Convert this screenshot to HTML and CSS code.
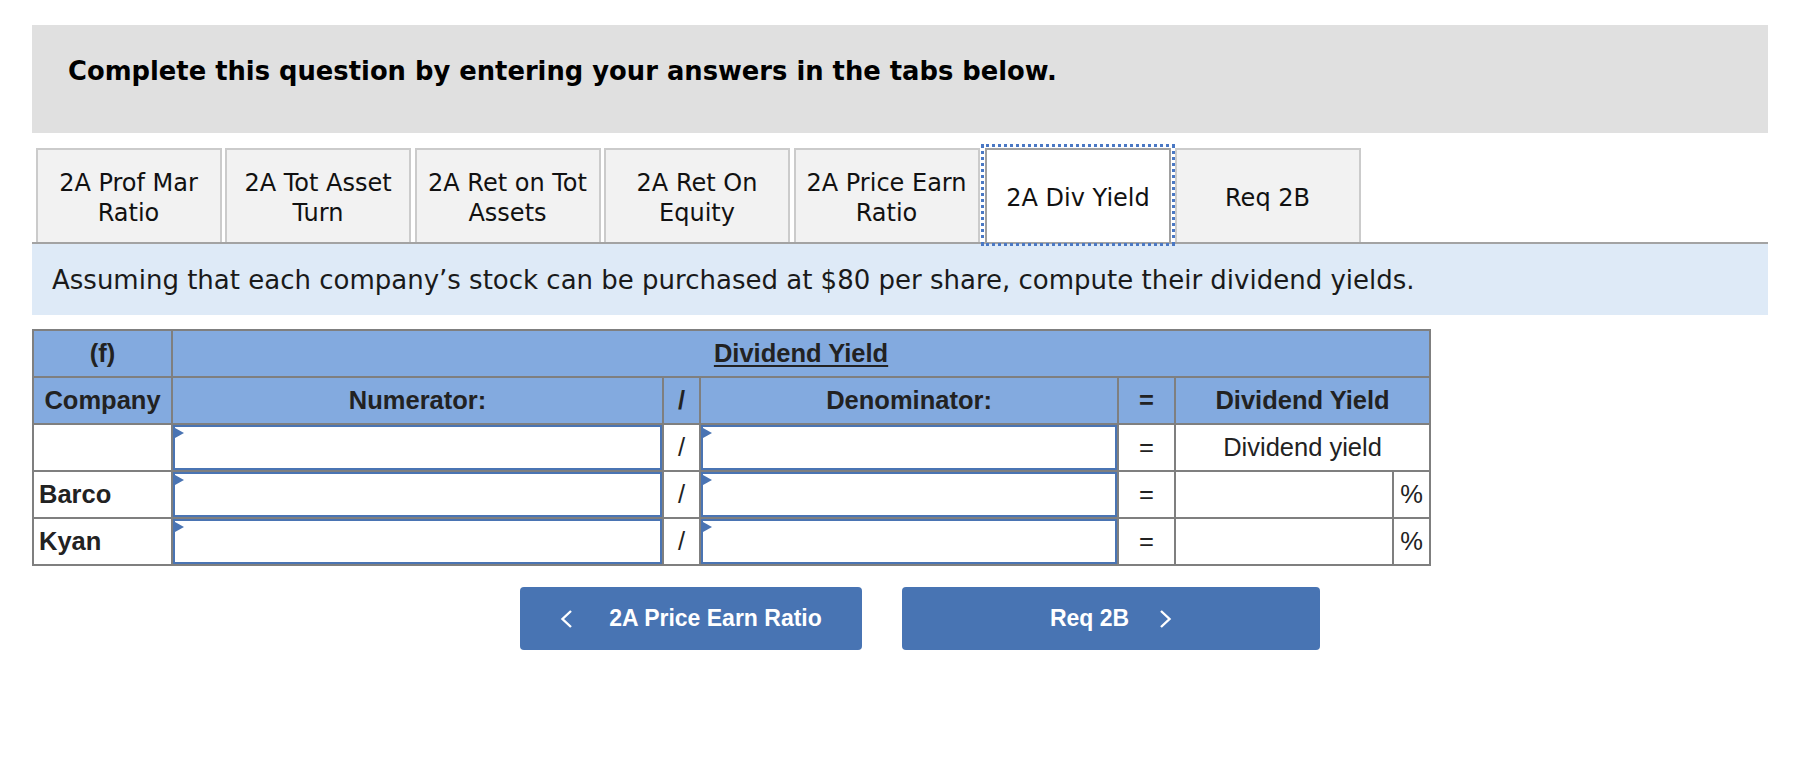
FILE: index.html
```html
<!DOCTYPE html>
<html lang="en">
<head>
  <meta charset="UTF-8">
  <meta name="viewport" content="width=device-width, initial-scale=1.0">
  <title>Dividend Yield</title>
  <link rel="stylesheet" href="styles.css">
</head>
<body>
  <div class="page">
    <div class="prompt">Complete this question by entering your answers in the tabs below.</div>

    <div class="tabs">
      <div class="tab">2A Prof Mar<br>Ratio</div>
      <div class="tab">2A Tot Asset<br>Turn</div>
      <div class="tab">2A Ret on Tot<br>Assets</div>
      <div class="tab">2A Ret On<br>Equity</div>
      <div class="tab">2A Price Earn<br>Ratio</div>
      <div class="tab active">2A Div Yield</div>
      <div class="tab">Req 2B</div>
    </div>

    <div class="note">Assuming that each company’s stock can be purchased at $80 per share, compute their dividend yields.</div>

    <table class="ratio-table">
      <colgroup>
        <col class="c-company">
        <col class="c-num">
        <col class="c-op">
        <col class="c-den">
        <col class="c-eq">
        <col class="c-result">
        <col class="c-unit">
      </colgroup>
      <tr class="head">
        <th>(f)</th>
        <th colspan="6"><span class="title">Dividend Yield</span></th>
      </tr>
      <tr class="head">
        <th>Company</th>
        <th>Numerator:</th>
        <th>/</th>
        <th>Denominator:</th>
        <th>=</th>
        <th colspan="2">Dividend Yield</th>
      </tr>
      <tr>
        <td class="name"></td>
        <td class="entry"><div class="field"></div></td>
        <td class="op">/</td>
        <td class="entry"><div class="field"></div></td>
        <td class="op">=</td>
        <td class="label" colspan="2">Dividend yield</td>
      </tr>
      <tr>
        <td class="name">Barco</td>
        <td class="entry"><div class="field"></div></td>
        <td class="op">/</td>
        <td class="entry"><div class="field"></div></td>
        <td class="op">=</td>
        <td class="result"></td>
        <td class="op">%</td>
      </tr>
      <tr>
        <td class="name">Kyan</td>
        <td class="entry"><div class="field"></div></td>
        <td class="op">/</td>
        <td class="entry"><div class="field"></div></td>
        <td class="op">=</td>
        <td class="result"></td>
        <td class="op">%</td>
      </tr>
    </table>

    <div class="nav">
      <button class="nav-btn prev">
        <svg width="13" height="18" viewBox="0 0 13 18"><polyline points="11,1 2.5,9 11,17" fill="none" stroke="#fff" stroke-width="2.4"/></svg>
        <span>2A Price Earn Ratio</span>
      </button>
      <button class="nav-btn next">
        <span>Req 2B</span>
        <svg width="13" height="18" viewBox="0 0 13 18"><polyline points="2,1 10.5,9 2,17" fill="none" stroke="#fff" stroke-width="2.4"/></svg>
      </button>
    </div>
  </div>
</body>
</html>
```

FILE: styles.css
```css
body {
  margin: 0;
  background: #fff;
  color: #111;
  font-family: "DejaVu Sans", Verdana, sans-serif;
}

.page {
  width: 1736px;
  margin: 25px 0 0 32px;
}

.prompt {
  height: 108px;
  box-sizing: border-box;
  padding: 31px 0 0 36px;
  background: #e0e0e0;
  color: #000;
  font-size: 25.8px;
  font-weight: bold;
  line-height: 31px;
}

.tabs {
  display: flex;
  gap: 3.5px;
  margin-top: 15px;
  padding-left: 3.5px;
  border-bottom: 2px solid #a3a3a3;
}

.tab {
  width: 186px;
  height: 94px;
  box-sizing: border-box;
  display: flex;
  align-items: center;
  justify-content: center;
  padding-top: 3px;
  text-align: center;
  background: #f2f2f2;
  border: 2px solid #cbcbcb;
  border-bottom: none;
  font-size: 24px;
  line-height: 30px;
}

.tab.active {
  margin-left: 2px;
  background: #fff;
  border: 2px solid #a0a0a0;
  border-bottom: none;
  outline: 3px dotted #4a78c4;
  outline-offset: 1.5px;
}

.note {
  height: 71px;
  display: flex;
  align-items: center;
  padding-left: 20px;
  background: #deeaf7;
  color: #1a1a1a;
  font-size: 26px;
}

.ratio-table {
  width: 1398px;
  margin-top: 14px;
  border-collapse: collapse;
  table-layout: fixed;
  border: 2px solid #7f7f7f;
  font-family: "Liberation Sans", Arial, sans-serif;
  font-size: 25.5px;
  color: #222;
}

.c-company { width: 139px; }
.c-num { width: 491px; }
.c-op { width: 37px; }
.c-den { width: 418px; }
.c-eq { width: 57px; }
.c-result { width: 218px; }
.c-unit { width: 37px; }

.ratio-table th,
.ratio-table td {
  height: 45px;
  padding: 0;
  border: 2px solid #7f7f7f;
  text-align: center;
}

.head th {
  background: #83aadf;
  font-weight: bold;
}

.title {
  text-decoration: underline;
  text-decoration-thickness: 2px;
  text-underline-offset: 3px;
}

.ratio-table td.name {
  text-align: left;
  padding-left: 5px;
  font-weight: bold;
}

.field {
  position: relative;
  height: 45px;
  box-sizing: border-box;
  border: 2px solid #4a74b3;
  background: #fff;
}

.field::before {
  content: "";
  position: absolute;
  top: 1px;
  left: 0;
  border-left: 9px solid #4a74b3;
  border-top: 5px solid transparent;
  border-bottom: 5px solid transparent;
}

.nav {
  display: flex;
  gap: 40px;
  margin-top: 21px;
  padding-left: 488px;
}

.nav-btn {
  height: 63px;
  display: flex;
  align-items: center;
  justify-content: center;
  gap: 36px;
  border: none;
  border-radius: 4px;
  background: #4874b3;
  color: #fff;
  font-family: "Liberation Sans", Arial, sans-serif;
  font-size: 23px;
  font-weight: bold;
  cursor: pointer;
}

.nav-btn.prev { width: 342px; }
.nav-btn.next { width: 418px; gap: 30px; }
```
